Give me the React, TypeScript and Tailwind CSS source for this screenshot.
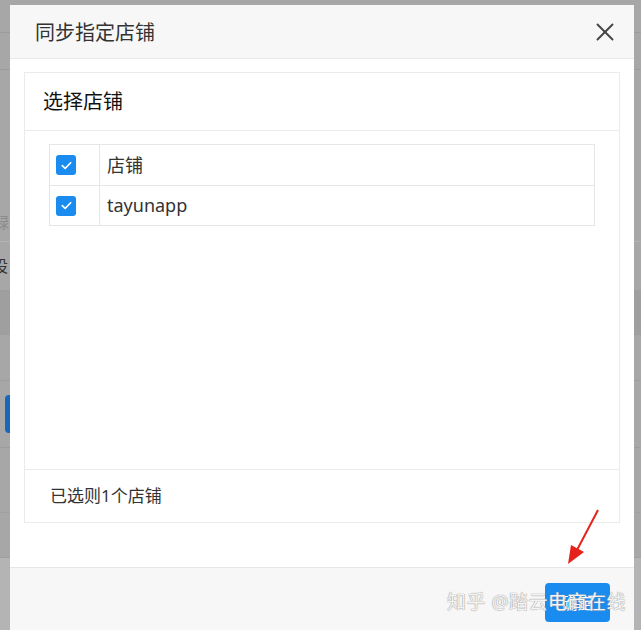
import { X } from 'lucide-react'

const font = { fontFamily: '"Microsoft YaHei", "Noto Sans", "Noto Sans CJK SC", sans-serif' }

function Check() {
  return (
    <span className="flex h-[20px] w-[20px] items-center justify-center rounded-[3px] bg-[#1a8cf0]">
      <svg width="13" height="13" viewBox="0 0 14 14" fill="none">
        <path d="M2.5 7.2l3 3 6-6.2" stroke="#fff" strokeWidth="1.8" strokeLinecap="round" strokeLinejoin="round" />
      </svg>
    </span>
  )
}

export default function App() {
  const rows = ['店铺', 'tayunapp']

  return (
    <div className="relative h-[630px] w-[641px] overflow-hidden bg-[#a7a7a7]" style={font}>
      {/* 背后的页面（被遮罩） */}
      <div className="flex h-full flex-col">
        <div className="h-[33px] border-b border-[#9c9c9c]" />
        <div className="h-[37px] border-b border-[#9c9c9c]" />
        <div className="flex h-[172px] items-end border-b border-[#b3b3b3] pb-[8px] text-[15px] text-[#8a8a8a]">
          <span className="-ml-[6px]">禄</span>
        </div>
        <div className="h-[48px] text-[16px] leading-[48px] text-[#333]">
          <span className="-ml-[8px]">设</span>
        </div>
        <div className="h-[45px] border-y border-[#9d9d9d] bg-[#9f9f9f]" />
        <div className="h-[45px]" />
        <div className="flex h-[68px] items-center border-y border-[#9d9d9d]">
          <div className="ml-[5px] h-[38px] w-[10px] rounded-l-[4px] bg-[#1769b8]" />
        </div>
        <div className="h-[65px] border-b border-[#a0a0a0]" />
        <div className="h-[45px] border-b border-[#a0a0a0]" />
        <div className="flex-1 bg-[#b4b4b4]" />
      </div>

      {/* 弹窗 */}
      <div className="absolute left-[10px] top-[5px] flex w-[624px] flex-col bg-white">
        <div className="flex h-[54px] items-center justify-between border-b border-[#e8e8e8] bg-[#f7f7f7] pl-[25px] pr-[14px]">
          <span className="pt-[2px] text-[20px] text-[#333]">同步指定店铺</span>
          <X className="h-[30px] w-[30px] text-[#444]" strokeWidth={1.5} />
        </div>

        <div className="px-[14px] pb-[44px] pt-[13px]">
          <div className="border border-[#ebebeb]">
            <div className="flex h-[58px] items-center border-b border-[#ebebeb] px-[18px] text-[20px] text-[#111]">
              选择店铺
            </div>
            <div className="h-[338px] pl-[24px] pr-[24px] pt-[13px]">
              <div className="border border-[#e6e6e6]">
                {rows.map((r, i) => (
                  <div
                    key={r}
                    className={`flex h-[40px] ${i > 0 ? 'border-t border-[#e6e6e6]' : ''}`}
                  >
                    <div className="flex w-[50px] items-center border-r border-[#e6e6e6] pl-[6px]">
                      <Check />
                    </div>
                    <div className="flex items-center pl-[7px] text-[18px] text-[#333]">{r}</div>
                  </div>
                ))}
              </div>
            </div>
            <div className="flex h-[53px] items-center border-t border-[#ebebeb] px-[25px] text-[17px] text-[#333]">
              已选则1个店铺
            </div>
          </div>
        </div>

        <div className="flex h-[80px] justify-end border-t border-[#e6e6e6] bg-[#f7f7f7] pr-[24px] pt-[15px]">
          <button className="h-[39px] w-[65px] rounded-[4px] bg-[#1a8cf0] text-[16px] text-white">确定</button>
        </div>
      </div>

      {/* 红色箭头 */}
      <svg className="absolute left-0 top-0" width="641" height="630" viewBox="0 0 641 630">
        <line x1="598" y1="510" x2="577" y2="550" stroke="#e5231b" strokeWidth="2" />
        <polygon points="568,564 571,545 584,552" fill="#e5231b" />
      </svg>

      {/* 水印 */}
      <div
        className="absolute left-[447px] top-[588px] text-[19px] tracking-[0.5px] text-[#f4f4f4]"
        style={{ textShadow: '0 0 1px #999, 0 0 1px #999' }}
      >
        知乎 @踏云电商在线
      </div>
    </div>
  )
}
